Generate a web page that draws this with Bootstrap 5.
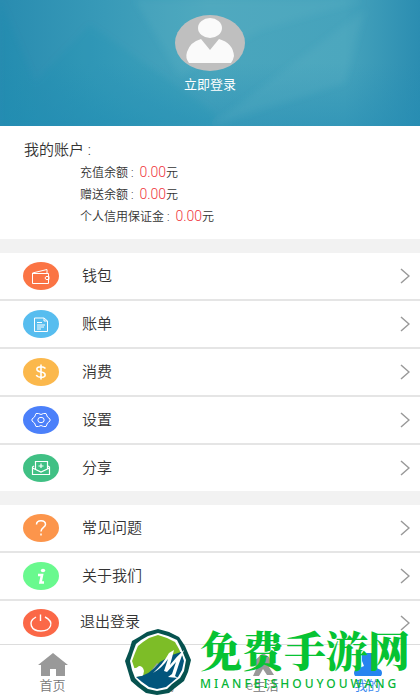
<!DOCTYPE html>
<html lang="zh-CN">
<head>
<meta charset="utf-8">
<meta name="viewport" content="width=device-width, initial-scale=1">
<title>我的</title>
<link href="https://cdn.jsdelivr.net/npm/bootstrap@5.3.0/dist/css/bootstrap.min.css" rel="stylesheet">
<style>
body{font-family:Roboto,"Noto Sans CJK SC",sans-serif;font-size:15px;color:#333;background:#fff}
.hero{background:#3a9cb9;height:126px;padding-top:15px;color:#fff;font-size:13px;line-height:20px;isolation:isolate}
.hero-bg{z-index:-1}
.account{padding:12px 24px 11px}
.account h1{font-size:15px;line-height:24px;font-weight:350}
.account dl{padding-left:56px;font-size:12px;line-height:22px}
.account dl div{gap:6px}
.account dt,.account dd{font-weight:350}
.amount{color:#f0333c;font-size:14px;line-height:14px}
.band{height:14px;background:#f2f2f2}
.entry{height:46px;padding:0 10px 0 23px;color:#333;font-weight:350;background:#fff}
.entries li+li{border-top:2px solid #e5e5e5}
.entry-icon{width:36px;height:28px;margin-right:23px}
.final .entry{height:43px}
.final .entry-icon{margin-right:21px}
.tabs{border-top:1px solid #ddd;padding:8px 0 5px}
.tabs a{color:#777;font-size:13px;line-height:18px;font-weight:350}
.tabs a.active{color:#3385ee}
.tabs svg{width:32px;height:24px}
.brand{left:124px;bottom:4px;gap:8px;pointer-events:none}
.brand-name{color:#06c333;font-size:42px;line-height:42px;font-weight:900;font-family:"Noto Serif CJK SC","Noto Sans CJK SC",sans-serif}
.brand-latin{color:#06b536;margin:7px 0 5px;font-size:12px;line-height:14px;letter-spacing:3px;font-family:"Noto Sans",sans-serif;font-weight:500}
</style>
<script src="https://cdn.jsdelivr.net/npm/bootstrap@5.3.0/dist/js/bootstrap.bundle.min.js"></script>
</head>
<body class="d-flex flex-column min-vh-100 position-relative">
<header class="hero position-relative d-flex flex-column align-items-center">
<svg class="hero-bg position-absolute top-0 start-0 w-100 h-100" viewBox="0 0 420 126" preserveAspectRatio="none" aria-hidden="true">
<defs><linearGradient id="sea"><stop stop-color="#298cb0"/><stop offset=".25" stop-color="#389ab8"/><stop offset=".5" stop-color="#4aa6bd"/><stop offset=".82" stop-color="#46a3bc"/><stop offset="1" stop-color="#2b8db1"/></linearGradient>
<linearGradient id="deep" x2="0" y2="1"><stop offset=".5" stop-color="#258db4" stop-opacity="0"/><stop offset="1" stop-color="#258db4" stop-opacity=".55"/></linearGradient>
<filter id="soft"><feGaussianBlur stdDeviation="3"/></filter></defs>
<path fill="url(#sea)" d="M0 0H420V126H0Z"/><path fill="url(#deep)" d="M0 0H420V126H0Z"/>
<g filter="url(#soft)"><path fill="#6bbccc" fill-opacity=".15" d="M135 0H365L260 30 180 76ZM210 126 365 10 345 83Z"/>
<path fill="#198aac" fill-opacity=".12" d="M35 82 90 25 215 113V126H0V0Z"/></g>
</svg>
<svg width="70" height="56" viewBox="0 0 70 56" aria-hidden="true"><ellipse cx="35" cy="28" rx="35" ry="28" fill="#bfbfbf"/><ellipse cx="35" cy="13" rx="12" ry="10" fill="#fafafa"/><path fill="#fafafa" d="M26 24 35 35 44 24Q58 28 59 41 58 46 56 48H14Q10 43 12 37 15 27 26 24Z"/></svg>
<a href="#login" class="text-white text-decoration-none mt-1">立即登录</a>
</header>
<main class="flex-grow-1">
<section class="account">
<h1 class="mb-0">我的账户 :</h1>
<dl class="mb-0">
<div class="d-flex"><dt>充值余额 :</dt><dd class="mb-0"><span class="amount">0.00</span>元</dd></div>
<div class="d-flex"><dt>赠送余额 :</dt><dd class="mb-0"><span class="amount">0.00</span>元</dd></div>
<div class="d-flex"><dt>个人信用保证金 :</dt><dd class="mb-0"><span class="amount">0.00</span>元</dd></div>
</dl>
</section>
<div class="band"></div>
<ul class="entries list-unstyled mb-0">
<li><a href="#wallet" class="entry d-flex align-items-center text-decoration-none"><svg class="entry-icon" viewBox="0 0 36 28"><ellipse cx="18" cy="14" rx="18" ry="14" fill="#fb7444"/><g fill="none" stroke="#fff"><path d="M10 11.500H25.500V21.500H9.500V11L24 7.500V11M26 14.500H23Q21 16 23 17.500H26Z"/></g></svg><span>钱包</span><svg class="ms-auto" width="10" height="16" viewBox="0 0 10 16"><path d="M1 1 9 8 1 15" fill="none" stroke="#999" stroke-width="1.500"/></svg></a></li>
<li><a href="#bill" class="entry d-flex align-items-center text-decoration-none"><svg class="entry-icon" viewBox="0 0 36 28"><ellipse cx="18" cy="14" rx="18" ry="14" fill="#57bdef"/><path d="M11.500 8H21L24.500 11V21.500H11.500ZM21 8V11H24.500M14 12.500H19M14 15H22M14 17H21M14 19H18" fill="none" stroke="#fff"/></svg><span>账单</span><svg class="ms-auto" width="10" height="16" viewBox="0 0 10 16"><path d="M1 1 9 8 1 15" fill="none" stroke="#999" stroke-width="1.500"/></svg></a></li>
<li><a href="#spend" class="entry d-flex align-items-center text-decoration-none"><svg class="entry-icon" viewBox="0 0 36 28"><ellipse cx="18" cy="14" rx="18" ry="14" fill="#fbb84c"/><path d="M22.500 10.500Q21 8.700 18 8.700C12.500 8.700 12.500 13.200 18 14S23.500 19.300 18 19.300Q14.500 19.300 13.300 17M18 6.500V21.500" fill="none" stroke="#fff" stroke-width="1.600"/></svg><span>消费</span><svg class="ms-auto" width="10" height="16" viewBox="0 0 10 16"><path d="M1 1 9 8 1 15" fill="none" stroke="#999" stroke-width="1.500"/></svg></a></li>
<li><a href="#settings" class="entry d-flex align-items-center text-decoration-none"><svg class="entry-icon" viewBox="0 0 36 28"><ellipse cx="18" cy="14" rx="18" ry="14" fill="#4b80fa"/><g fill="none" stroke="#fff"><path d="M13 7.500H15.500Q18 9.500 20.500 7.500H23L24.500 11 27 13V15L24.500 17 23 20.500H20.500Q18 18.500 15.500 20.500H13L11.500 17 9 15V13L11.500 11Z"/><ellipse cx="18" cy="14" rx="3.200" ry="2.700"/></g></svg><span>设置</span><svg class="ms-auto" width="10" height="16" viewBox="0 0 10 16"><path d="M1 1 9 8 1 15" fill="none" stroke="#999" stroke-width="1.500"/></svg></a></li>
<li><a href="#share" class="entry d-flex align-items-center text-decoration-none"><svg class="entry-icon" viewBox="0 0 36 28"><ellipse cx="18" cy="14" rx="18" ry="14" fill="#40c084"/><path d="M12.500 15V7.500H24.500V15M11 12 9.500 13V20.500H26.500V13L25 12M9.500 14 18 18 26.500 14M18 9.500V14M15.500 12H20.500" fill="none" stroke="#fff" stroke-width="1.200"/></svg><span>分享</span><svg class="ms-auto" width="10" height="16" viewBox="0 0 10 16"><path d="M1 1 9 8 1 15" fill="none" stroke="#999" stroke-width="1.500"/></svg></a></li>
</ul>
<div class="band"></div>
<ul class="entries list-unstyled mb-0">
<li><a href="#faq" class="entry d-flex align-items-center text-decoration-none"><svg class="entry-icon" viewBox="0 0 36 28"><ellipse cx="18" cy="14" rx="18" ry="14" fill="#fc954b"/><path d="M13.500 10.500C13.500 5.500 22.500 5.500 22.500 10.500 22.500 13.500 18 13.500 18 17.500M18 19.500V21.500" fill="none" stroke="#fff" stroke-width="1.500"/></svg><span>常见问题</span><svg class="ms-auto" width="10" height="16" viewBox="0 0 10 16"><path d="M1 1 9 8 1 15" fill="none" stroke="#999" stroke-width="1.500"/></svg></a></li>
<li><a href="#about" class="entry d-flex align-items-center text-decoration-none"><svg class="entry-icon" viewBox="0 0 36 28"><ellipse cx="18" cy="14" rx="18" ry="14" fill="#69f98e"/><ellipse cx="20" cy="8.500" rx="2.200" ry="1.800" fill="#fff"/><path d="M15 13H19L17.500 20.500H21" fill="none" stroke="#fff" stroke-width="2.600"/></svg><span>关于我们</span><svg class="ms-auto" width="10" height="16" viewBox="0 0 10 16"><path d="M1 1 9 8 1 15" fill="none" stroke="#999" stroke-width="1.500"/></svg></a></li>
<li class="final"><a href="#logout" class="entry d-flex align-items-center text-decoration-none"><svg class="entry-icon" viewBox="0 0 36 28"><ellipse cx="18" cy="14" rx="18" ry="14" fill="#fb6847"/><path d="M13 8C4 13 8 22 18 22S32 13 22 8M17.500 5.500V12" fill="none" stroke="#fff" stroke-width="1.400"/></svg><span>退出登录</span><svg class="ms-auto" width="10" height="16" viewBox="0 0 10 16"><path d="M1 1 9 8 1 15" fill="none" stroke="#999" stroke-width="1.500"/></svg></a></li>
</ul>
</main>
<nav class="tabs row g-0 text-center">
<a class="col text-decoration-none d-flex flex-column align-items-center" href="#home"><svg viewBox="0 0 32 24"><path fill="#999" d="M16 0 31 12H28V23H19V16H13V23H4V12H1Z"/></svg>首页</a>
<a class="col text-decoration-none d-flex flex-column align-items-center" href="#mall"><svg viewBox="0 0 32 24"><path fill="#999" d="M4 4H28L26 20H6Z"/></svg>e商城</a>
<a class="col text-decoration-none d-flex flex-column align-items-center" href="#life"><svg viewBox="0 0 32 24"><path fill="#999" d="M16 0 22 4 26 12 22 14 27 22H20L16 16 12 23H6L10 14 5 10Z"/></svg>e生活</a>
<a class="col text-decoration-none d-flex flex-column align-items-center active" href="#me"><svg viewBox="0 0 32 24"><path fill="#2684f0" d="M10 0H22V8L20 13 29 17Q31 20 29 23H3Q1 20 3 17L12 13 10 8Z"/></svg>我的</a>
</nav>
<div class="brand position-absolute d-flex align-items-end">
<svg width="68" height="68" viewBox="0 0 68 68" aria-hidden="true">
<path d="M23 4 34 1 45 4 55 9 61 18 67 32 64 44 60 53 51 60 45 65 33 67 22 65 14 59 7 53 4 43 1 33 5 23 8 13 15 9Z" fill="#06524f"/>
<path d="M24 8 34 5 44 8 53 12 57 20 62 32 60 43 56 50 48 56 43 61 33 63 24 61 17 56 11 50 8 42 6 33 9 24 12 16 17 12Z" fill="#fff"/>
<path d="M25 10 34 7 43 10 51 14 55 21 59 30 45 40 22 50 13 48 8 33 11 25 14 18 19 14Z" fill="#7dbd27"/>
<path d="M8 40Q12 41 15 38 19 38 20 43L19 48 12 48Z" fill="#fff"/>
<path d="M27 43 33 35 38 39 28 48Z" fill="#9aa3a2"/>
<path d="M12 49Q25 48 36 34L48 27 57 24 60 33 58 42 54 49 47 55 42 59 33 61 25 59 18 54Z" fill="#02557c"/>
<path d="M29 45Q39 36 45 25L50 22Q48 30 46 37 52 29 60 22 55 35 51 48L54 50 44 49 48 46 52 34 43 44 40 43 44 31Q38 40 29 45Z" fill="#fff"/>
</svg>
<div><div class="brand-name">免费手游网</div><div class="brand-latin">MIANFEISHOUYOUWANG</div></div>
</div>
</body>
</html>
